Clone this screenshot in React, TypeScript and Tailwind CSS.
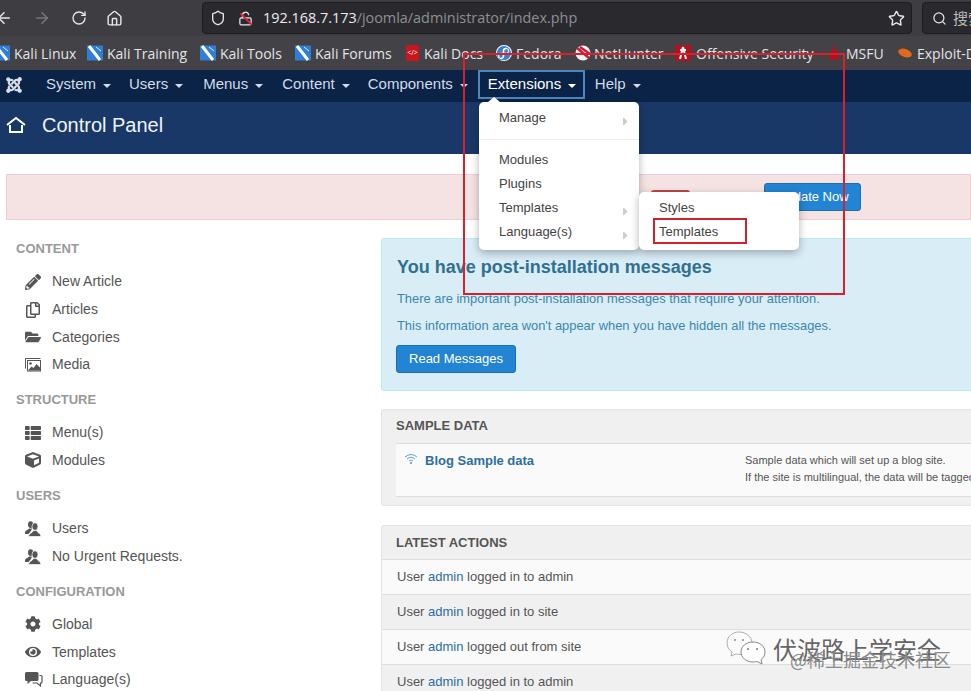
import React from "react";
import { ArrowLeft, ArrowRight, RotateCw, Home, Shield, LockOpen, Star, Search } from "lucide-react";
import { FaJoomla, FaPencilAlt, FaRegCopy, FaFolderOpen, FaThList, FaCube, FaCog, FaEye, FaFedora, FaCaretRight } from "react-icons/fa";

const KaliIcon = () => (
  <svg width="16" height="16" viewBox="0 0 16 16" className="shrink-0">
    <rect width="16" height="15" y="0.5" fill="#2f7fd8" />
    <path d="M2 1 L13 15" stroke="#fff" strokeWidth="3" />
    <path d="M9 2 L14 6" stroke="#dfeaf5" strokeWidth="1" />
  </svg>
);

const Book = ({ icon, label, w, iw }: { icon: React.ReactNode; label: string; w: string; iw?: string }) => (
  <div className={`flex items-center shrink-0 ${w}`}>
    <span className={`flex shrink-0 ${iw ?? "w-[20px]"}`}>{icon}</span>
    <span className="text-[14px] text-[#e4e4e6] whitespace-nowrap">{label}</span>
  </div>
);

const Caret = () => <span className="ml-[7px] mt-[3px] inline-block w-0 h-0 border-x-[4px] border-x-transparent border-t-[4px] border-t-current" />;

const NavItem = ({ label, active, cls }: { label: string; active?: boolean; cls?: string }) => (
  <div className={`flex items-center whitespace-nowrap text-[15px] ${active ? "h-[29px] border-2 border-[#4f86bd] bg-[#0b2346] text-white px-[8px] w-[107px] ml-[1px] mr-[1px]" : "h-[29px] text-[#d2dcea] px-[9px]"} ${cls ?? ""}`}>
    {label}
    <Caret />
  </div>
);

const SideHead = ({ children, cls }: { children: React.ReactNode; cls?: string }) => (
  <div className={`text-[13px] font-bold text-[#999] leading-[20px] pt-[1px] ${cls ?? ""}`}>{children}</div>
);

const SideItem = ({ icon, label }: { icon: React.ReactNode; label: string }) => (
  <div className="h-[27.7px] flex items-center pl-[9px] text-[14px] text-[#555]">
    <span className="w-[27px] flex text-[#555] text-[16px]">{icon}</span>
    {label}
  </div>
);

const Action = ({ text, odd }: { text: string; odd?: boolean }) => (
  <div className={`h-[35px] flex items-center pl-[15px] text-[13px] text-[#555] border-t border-[#ddd] ${odd ? "bg-[#f0f0f0]" : "bg-[#fafafa]"}`}>
    User&nbsp;<span className="text-[#2d6ca2]">admin</span>&nbsp;{text}
  </div>
);

const MenuRow = ({ label, arrow, cls }: { label: string; arrow?: boolean; cls?: string }) => (
  <div className={`relative h-[24px] flex items-center pl-[20px] text-[13px] text-[#444] ${cls ?? ""}`}>
    {label}
    {arrow && <FaCaretRight className="absolute right-[7px] top-[9px] text-[#ccc] text-[13px]" />}
  </div>
);

const UsersIcon = () => (
  <svg width="16" height="16" viewBox="0 0 16 16" fill="#555">
    <ellipse cx="5.6" cy="3.6" rx="2.6" ry="3.4" />
    <path d="M0 11.5 C0 9.5 3 9 4 7.5 L7 7.5 L6 10 L3.5 13 L0 13 Z" />
    <ellipse cx="10" cy="5.6" rx="3" ry="3.8" stroke="#fff" strokeWidth="0.7" />
    <path d="M3.5 15.5 C3.5 12.5 7.5 12 8.5 9.5 L11.5 9.5 C12.5 12 16 12.5 16 15.5 Z" stroke="#fff" strokeWidth="0.7" />
  </svg>
);

const MediaIcon = () => (
  <svg width="16" height="14" viewBox="0 0 16 14" fill="none" stroke="#555">
    <path d="M0.5 10.5 V0.5 H15.5" />
    <rect x="2.5" y="2.5" width="13" height="10.5" />
    <circle cx="5.5" cy="5.5" r="1.3" fill="#555" stroke="none" />
    <path d="M3 12.5 L6.5 8.5 L8.5 10 L11.5 6 L15 9.5 V12.5 Z" fill="#555" stroke="none" />
  </svg>
);

const CommentsIcon = () => (
  <svg width="18" height="16" viewBox="0 0 18 16">
    <path d="M1.5 0 H12 Q13.5 0 13.5 1.5 V7.5 Q13.5 9 12 9 H6 L2.5 12 V9 H1.5 Q0 9 0 7.5 V1.5 Q0 0 1.5 0 Z" fill="#555" />
    <path d="M14.5 3.5 H16 Q17 3.5 17 4.5 V10 Q17 11 16 11 H15.5 V14 L12 11 H7.5" fill="none" stroke="#555" strokeWidth="1.2" />
  </svg>
);

const WeChat = () => (
  <svg width="40" height="34" viewBox="0 0 40 34" className="shrink-0">
    <path d="M13 1 C6 1 1 6 1 12 C1 16 3 19 6 21 L5 25 L10 23 C11 23 12 23.5 14 23.5 C21 23.5 26 18 26 12 C26 6 20 1 13 1 Z" fill="#fbfbfb" stroke="#9a9a9a" strokeWidth="0.8" />
    <circle cx="9" cy="9" r="1" fill="#8a8a8a" />
    <circle cx="17" cy="9" r="1" fill="#8a8a8a" />
    <path d="M27 11 C20 11 15 15.5 15 21 C15 26.5 20 31 27 31 C29 31 30 30.5 31 30.5 L36 33 L35 28.5 C38 26.5 39 24 39 21 C39 15.5 34 11 27 11 Z" fill="#fff" stroke="#7a7a7a" strokeWidth="0.9" />
    <circle cx="22" cy="18" r="1" fill="#7a7a7a" />
    <circle cx="31" cy="18" r="1" fill="#7a7a7a" />
  </svg>
);

export default function App() {
  return (
    <div className="relative w-[971px] h-[691px] overflow-hidden bg-white font-['Liberation_Sans',sans-serif]">
      {/* browser toolbar */}
      <div className="h-[36px] bg-[#3e3d42] flex items-center font-['Open_Sans',sans-serif]">
        <ArrowLeft size={18} className="text-[#e8e8ea] ml-[-5px] shrink-0" />
        <ArrowRight size={18} className="text-[#77777b] ml-[20px] shrink-0" />
        <RotateCw size={16} className="text-[#e8e8ea] ml-[20px] shrink-0" />
        <Home size={17} className="text-[#e8e8ea] ml-[19px] shrink-0" />
        <div className="ml-[79px] w-[710px] shrink-0 h-[32px] bg-[#2a2a2e] border border-[#1c1b1f] rounded-[4px] flex items-center pl-[7px] pr-[6px]">
          <Shield size={16} className="text-[#e8e8ea]" />
          <span className="relative ml-[12px] mr-[10px] flex">
            <LockOpen size={15} className="text-[#e8e8ea]" />
            <span className="absolute left-[0px] top-[7px] w-[16px] h-[2px] bg-[#e0243f] rotate-45" />
          </span>
          <span className="text-[14.4px] text-[#ececee]">192.168.7.173</span>
          <span className="text-[14.4px] text-[#8f8f94]">/joomla/administrator/index.php</span>
          <Star size={17} className="text-[#e8e8ea] ml-auto" />
        </div>
        <div className="ml-[10px] w-[60px] h-[32px] bg-[#2a2a2e] border border-[#1c1b1f] rounded-l-[4px] flex items-center pl-[9px] shrink-0">
          <Search size={15} className="text-[#e8e8ea] shrink-0" />
          <span className="ml-[6px] text-[15px] text-[#b9b9bc] whitespace-nowrap font-['Noto_Sans_CJK_SC',sans-serif]">搜索</span>
        </div>
      </div>
      {/* bookmarks */}
      <div className="h-[34px] bg-[#434247] flex items-center font-['Open_Sans',sans-serif] overflow-hidden">
        <div className="ml-[-6px]" />
        <Book w="w-[93px]" icon={<KaliIcon />} label="Kali Linux" />
        <Book w="w-[113px]" icon={<KaliIcon />} label="Kali Training" />
        <Book w="w-[95px]" icon={<KaliIcon />} label="Kali Tools" />
        <Book w="w-[111px]" icon={<KaliIcon />} label="Kali Forums" />
        <Book w="w-[90px]" iw="w-[18px]" icon={<span className="w-[13px] h-[16px] bg-[#c9161d] rounded-[1px] text-[7px] text-white flex items-center justify-center shrink-0">&lt;/&gt;</span>} label="Kali Docs" />
        <Book w="w-[79px]" icon={<FaFedora className="text-[#3b7fc4] bg-white rounded-full text-[16px]" />} label="Fedora" />
        <Book w="w-[100px]" iw="w-[19px]" icon={<svg width="16" height="16" viewBox="0 0 16 16"><circle cx="8" cy="8" r="7.5" fill="#f2f2f2" /><path d="M2 3 L14 13 M5 2 L15 9" stroke="#c81e3c" strokeWidth="2.5" /></svg>} label="NetHunter" />
        <Book w="w-[153px]" iw="w-[21px]" icon={<svg width="16" height="16" viewBox="0 0 16 16"><rect width="16" height="16" fill="#b0131d" /><path d="M8 2 L5 14 M8 2 L11 14 M5 5 H11" stroke="#f4f4f4" strokeWidth="2" /></svg>} label="Offensive Security" />
        <Book w="w-[69px]" iw="w-[18px]" icon={<svg width="12" height="16" viewBox="0 0 12 16"><path d="M6 0 L9 7 L11 15 H1 L3 7 Z" fill="#b0131d" /></svg>} label="MSFU" />
        <Book w="w-[100px]" icon={<svg width="15" height="12" viewBox="0 0 15 12"><ellipse cx="8" cy="6" rx="7" ry="4" fill="#e2681a" transform="rotate(20 8 6)" /></svg>} label="Exploit-DB" />
      </div>
      {/* joomla nav */}
      <div className="h-[32px] bg-[#0b2346] flex items-center pb-[3px]">
        <FaJoomla className="text-[#d9dfe8] text-[18px] ml-[5px] mr-[14px] shrink-0" />
        <NavItem label="System" />
        <NavItem label="Users" cls="mr-[2px]" />
        <NavItem label="Menus" cls="mr-[1px]" />
        <NavItem label="Content" />
        <NavItem label="Components" />
        <NavItem label="Extensions" active />
        <NavItem label="Help" />
      </div>
      {/* header */}
      <div className="h-[52px] bg-[#1a3867] flex items-center pl-[6px] pb-[6px]">
        <svg width="20" height="18" viewBox="0 0 20 18" fill="none" stroke="#fff" strokeWidth="2">
          <path d="M1 9 L10 2 L19 9" />
          <path d="M4 9 V16 H16 V9" />
        </svg>
        <span className="ml-[16px] text-[20px] text-[#eef3fa]">Control Panel</span>
      </div>
      {/* alert */}
      <div className="mt-[20px] ml-[6px] h-[46px] bg-[#f5e3e3] border border-[#eccfd3] flex items-center relative">
        <span className="ml-[644px] w-[39px] h-[16px] mb-[-1px] bg-[#b94a48] rounded-[3px]" />
        <span className="ml-[4px] text-[13px] text-[#a96c6c]">is available</span>
        <span className="ml-[6px] w-[97px] h-[28px] bg-[#2384d3] border border-[#1a6fb5] rounded-[3px] text-[13px] text-white flex items-center justify-center">Update Now</span>
      </div>
      {/* body */}
      <div className="flex mt-[18px]">
        <aside className="w-[381px] shrink-0 pl-[16px]">
          <SideHead>CONTENT</SideHead>
          <div className="mt-[9px]">
            <SideItem icon={<FaPencilAlt />} label="New Article" />
            <SideItem icon={<FaRegCopy />} label="Articles" />
            <SideItem icon={<FaFolderOpen />} label="Categories" />
            <SideItem icon={<MediaIcon />} label="Media" />
          </div>
          <SideHead cls="mt-[10px]">STRUCTURE</SideHead>
          <div className="mt-[9px]">
            <SideItem icon={<FaThList />} label="Menu(s)" />
            <SideItem icon={<FaCube />} label="Modules" />
          </div>
          <SideHead cls="mt-[11px]">USERS</SideHead>
          <div className="mt-[9px]">
            <SideItem icon={<UsersIcon />} label="Users" />
            <SideItem icon={<UsersIcon />} label="No Urgent Requests." />
          </div>
          <SideHead cls="mt-[10px]">CONFIGURATION</SideHead>
          <div className="mt-[9px]">
            <SideItem icon={<FaCog />} label="Global" />
            <SideItem icon={<FaEye />} label="Templates" />
            <SideItem icon={<CommentsIcon />} label="Language(s)" />
          </div>
        </aside>
        <main className="flex-1 min-w-0">
          <div className="h-[153px] w-[620px] bg-[#d9edf7] border border-[#bce8f1] rounded-l-[3px] pl-[15px] pt-[17px] text-[#3a87ad]">
            <div className="text-[18px] font-bold leading-[22px] text-[#31708f]">You have post-installation messages</div>
            <div className="mt-[12px] text-[12.9px] leading-[18px]">There are important post-installation messages that require your attention.</div>
            <div className="mt-[9px] text-[12.9px] leading-[18px]">This information area won't appear when you have hidden all the messages.</div>
            <div className="mt-[10px] ml-[-1px] w-[120px] h-[28px] bg-[#2384d3] border border-[#1a6fb5] rounded-[3px] text-[13px] text-white flex items-center justify-center">Read Messages</div>
          </div>
          <div className="mt-[18px] w-[620px] h-[97px] bg-[#f0f0f0] border border-[#e3e3e3] rounded-l-[3px] pl-[14px]">
            <div className="h-[33px] pb-[1px] flex items-center text-[13px] font-bold text-[#555]">SAMPLE DATA</div>
            <div className="h-[54px] bg-[#fafafa] border-y border-[#ddd] flex pt-[8px]">
              <svg width="14" height="12" viewBox="0 0 14 12" fill="none" stroke="#6aa0c8" strokeWidth="1" className="ml-[8px] mt-[1px] shrink-0">
                <path d="M1 4 Q7 -1 13 4 M3 6 Q7 2.5 11 6 M5 8 Q7 6 9 8" />
                <circle cx="7" cy="10" r="0.7" fill="#6aa0c8" />
              </svg>
              <span className="ml-[7px] w-[320px] shrink-0 text-[13px] font-bold text-[#2f6f9f] leading-[18px]">Blog Sample data</span>
              <div className="text-[11px] text-[#555] leading-[17px] whitespace-nowrap">
                <div>Sample data which will set up a blog site.</div>
                <div>If the site is multilingual, the data will be tagged as multilingual.</div>
              </div>
            </div>
          </div>
          <div className="mt-[19px] w-[620px] bg-[#f0f0f0] border border-[#e3e3e3] rounded-l-[3px]">
            <div className="h-[33px] flex items-center pl-[14px] text-[13px] font-bold text-[#555]">LATEST ACTIONS</div>
            <Action text="logged in to admin" />
            <Action text="logged in to site" odd />
            <Action text="logged out from site" />
            <Action text="logged in to admin" odd />
          </div>
        </main>
      </div>

      {/* extensions dropdown */}
      <div className="absolute left-[479px] top-[102px] w-[160px] h-[148px] bg-white rounded-[5px] shadow-[0_3px_8px_rgba(0,0,0,0.3)] pt-[4px]">
        <div className="absolute left-[9px] top-[-5px] w-0 h-0 border-x-[6px] border-x-transparent border-b-[5px] border-b-white" />
        <MenuRow label="Manage" arrow />
        <div className="h-px bg-[#eee] mt-[9px] mb-[7px]" />
        <div className="pt-[1px]">
          <MenuRow label="Modules" />
          <MenuRow label="Plugins" />
          <MenuRow label="Templates" arrow />
          <MenuRow label="Language(s)" arrow />
        </div>
      </div>
      <div className="absolute left-[639px] top-[192px] w-[160px] h-[58px] bg-white rounded-[5px] shadow-[0_3px_8px_rgba(0,0,0,0.3)] pt-[4px]">
        <MenuRow label="Styles" />
        <MenuRow label="Templates" />
      </div>

      {/* annotation rectangles */}
      <div className="absolute left-[463px] top-[53px] w-[382px] h-[242px] border-2 border-[#d9202f]" />
      <div className="absolute left-[653px] top-[218px] w-[94px] h-[26px] border-2 border-[#d0212e]" />

      {/* watermark */}
      <div className="absolute left-[726px] top-[631px] flex items-center">
        <WeChat />
        <span className="ml-[7px] mt-[2px] text-[24px] text-[#666] font-['Noto_Sans_CJK_SC',sans-serif] leading-[30px] whitespace-nowrap [text-shadow:1px_1px_0_#fff]">伏波路上学安全</span>
      </div>
      <div className="absolute left-[790px] top-[646px] text-[18px] leading-[26px] text-[#8a8a8a] font-['Noto_Sans_CJK_SC',sans-serif] whitespace-nowrap">@稀土掘金技术社区</div>
    </div>
  );
}
